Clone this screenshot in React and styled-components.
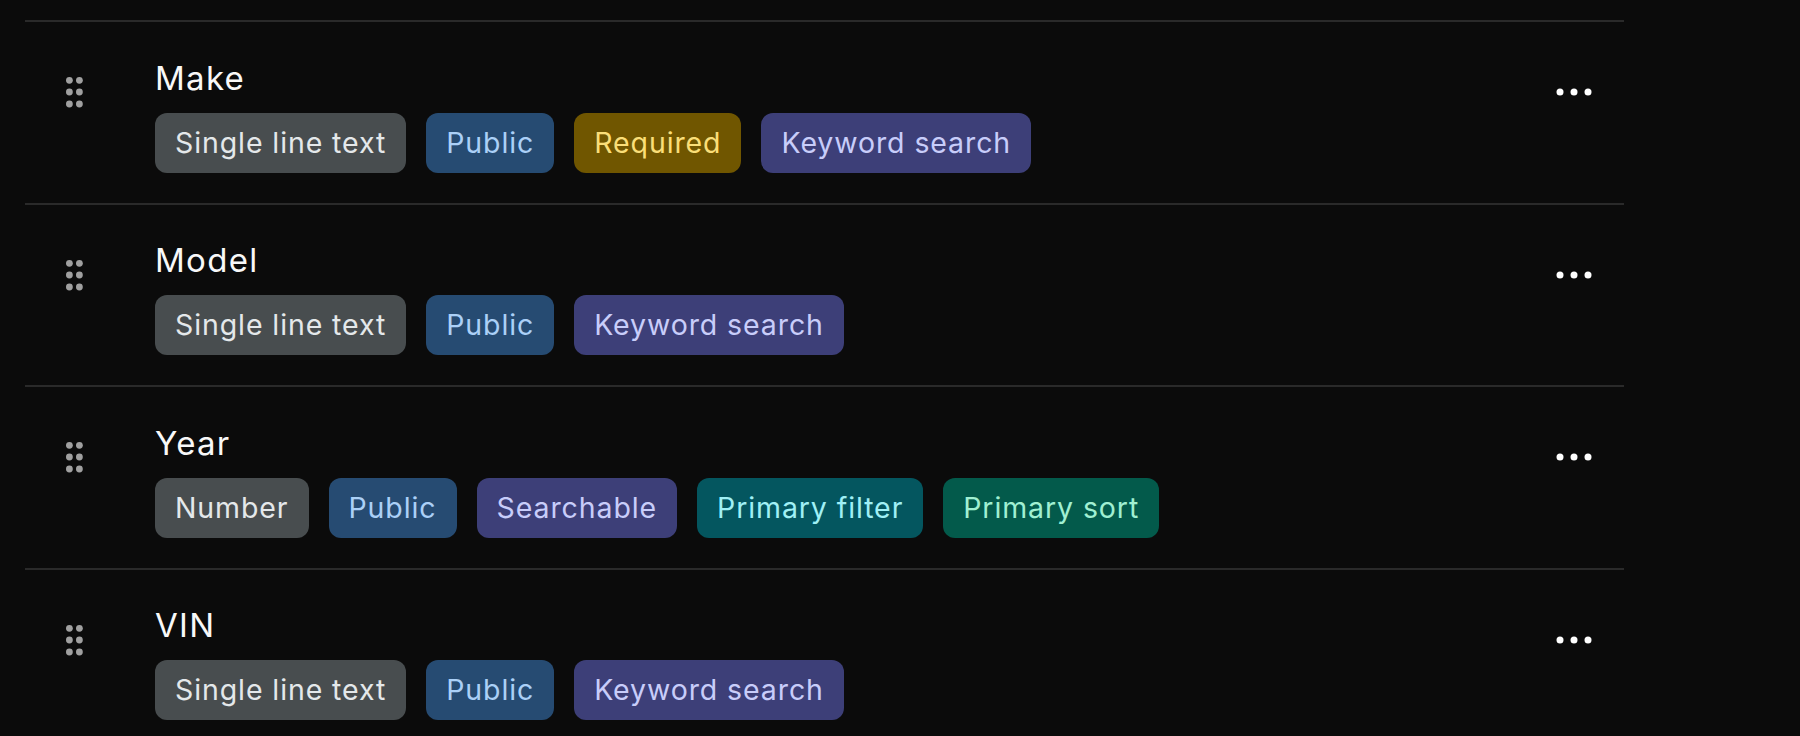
import React from "react";
import styled, { createGlobalStyle } from "styled-components";

const GlobalStyle = createGlobalStyle`
  html, body {
    margin: 0;
    padding: 0;
    background: #0b0b0b;
    overflow: hidden;
  }
  body {
    font-family: Inter, "Noto Sans", "Liberation Sans", sans-serif;
    -webkit-font-smoothing: antialiased;
  }
`;

const Page = styled.div`
  padding: 20px 0 0 25px;
  width: 1599px;
`;

const List = styled.div`
  display: flex;
  flex-direction: column;
`;

const Row = styled.div`
  display: grid;
  grid-template-columns: 18px 1fr 36px;
  align-items: start;
  border-top: 2px solid #2a2a2a;
  padding: 35.5px 32px 30px 41px;
  height: 182.5px;
  box-sizing: border-box;
`;

const Handle = styled.svg`
  display: block;
  margin-top: 18.9px;
  width: 18px;
  height: 32px;
`;

const Content = styled.div`
  display: flex;
  flex-direction: column;
  gap: 15px;
  margin-left: 71px;
`;

const Title = styled.div`
  color: #f8f8f8;
  font-size: 33px;
  line-height: 40px;
  font-weight: 400;
  letter-spacing: 1.3px;
`;

const Tags = styled.div`
  display: flex;
  gap: 20px;
`;

const tones = {
  gray: { bg: "#484d4f", fg: "#e4e8ea" },
  blue: { bg: "#264b72", fg: "#abd0f7" },
  yellow: { bg: "#705600", fg: "#fade78" },
  indigo: { bg: "#3d3f78", fg: "#c8cdfa" },
  teal: { bg: "#04565f", fg: "#a0f0f5" },
  green: { bg: "#035a4b", fg: "#a0f0d2" },
};

const Tag = styled.span`
  display: inline-flex;
  align-items: center;
  height: 60px;
  box-sizing: border-box;
  padding: 0 20px;
  border-radius: 12px;
  font-size: 28.5px;
  line-height: 34px;
  letter-spacing: 0.9px;
  white-space: nowrap;
  background: ${(p) => tones[p.$tone].bg};
  color: ${(p) => tones[p.$tone].fg};
`;

const MoreButton = styled.button`
  display: flex;
  align-items: center;
  justify-content: center;
  width: 36px;
  height: 12px;
  margin-top: 28.8px;
  padding: 0;
  border: none;
  background: transparent;
  cursor: pointer;
`;

const DragIcon = () => (
  <Handle viewBox="0 0 18 32">
    {[4.3, 16, 28].map((cy) => (
      <React.Fragment key={cy}>
        <circle cx="3.4" cy={cy} r="3.4" fill="#a0a0a0" />
        <circle cx="13.4" cy={cy} r="3.4" fill="#a0a0a0" />
      </React.Fragment>
    ))}
  </Handle>
);

const DotsIcon = () => (
  <svg width="36" height="8" viewBox="0 0 36 8">
    <circle cx="4" cy="4" r="3.5" fill="#ffffff" />
    <circle cx="18" cy="4" r="3.5" fill="#ffffff" />
    <circle cx="32" cy="4" r="3.5" fill="#ffffff" />
  </svg>
);

const fields = [
  {
    name: "Make",
    tags: [
      ["Single line text", "gray"],
      ["Public", "blue"],
      ["Required", "yellow"],
      ["Keyword search", "indigo"],
    ],
  },
  {
    name: "Model",
    tags: [
      ["Single line text", "gray"],
      ["Public", "blue"],
      ["Keyword search", "indigo"],
    ],
  },
  {
    name: "Year",
    tags: [
      ["Number", "gray"],
      ["Public", "blue"],
      ["Searchable", "indigo"],
      ["Primary filter", "teal"],
      ["Primary sort", "green"],
    ],
  },
  {
    name: "VIN",
    tags: [
      ["Single line text", "gray"],
      ["Public", "blue"],
      ["Keyword search", "indigo"],
    ],
  },
];

export default function App() {
  return (
    <>
      <GlobalStyle />
      <Page>
        <List>
          {fields.map((f) => (
            <Row key={f.name}>
              <DragIcon />
              <Content>
                <Title>{f.name}</Title>
                <Tags>
                  {f.tags.map(([label, tone]) => (
                    <Tag key={label} $tone={tone}>
                      {label}
                    </Tag>
                  ))}
                </Tags>
              </Content>
              <MoreButton aria-label="More options">
                <DotsIcon />
              </MoreButton>
            </Row>
          ))}
        </List>
      </Page>
    </>
  );
}
